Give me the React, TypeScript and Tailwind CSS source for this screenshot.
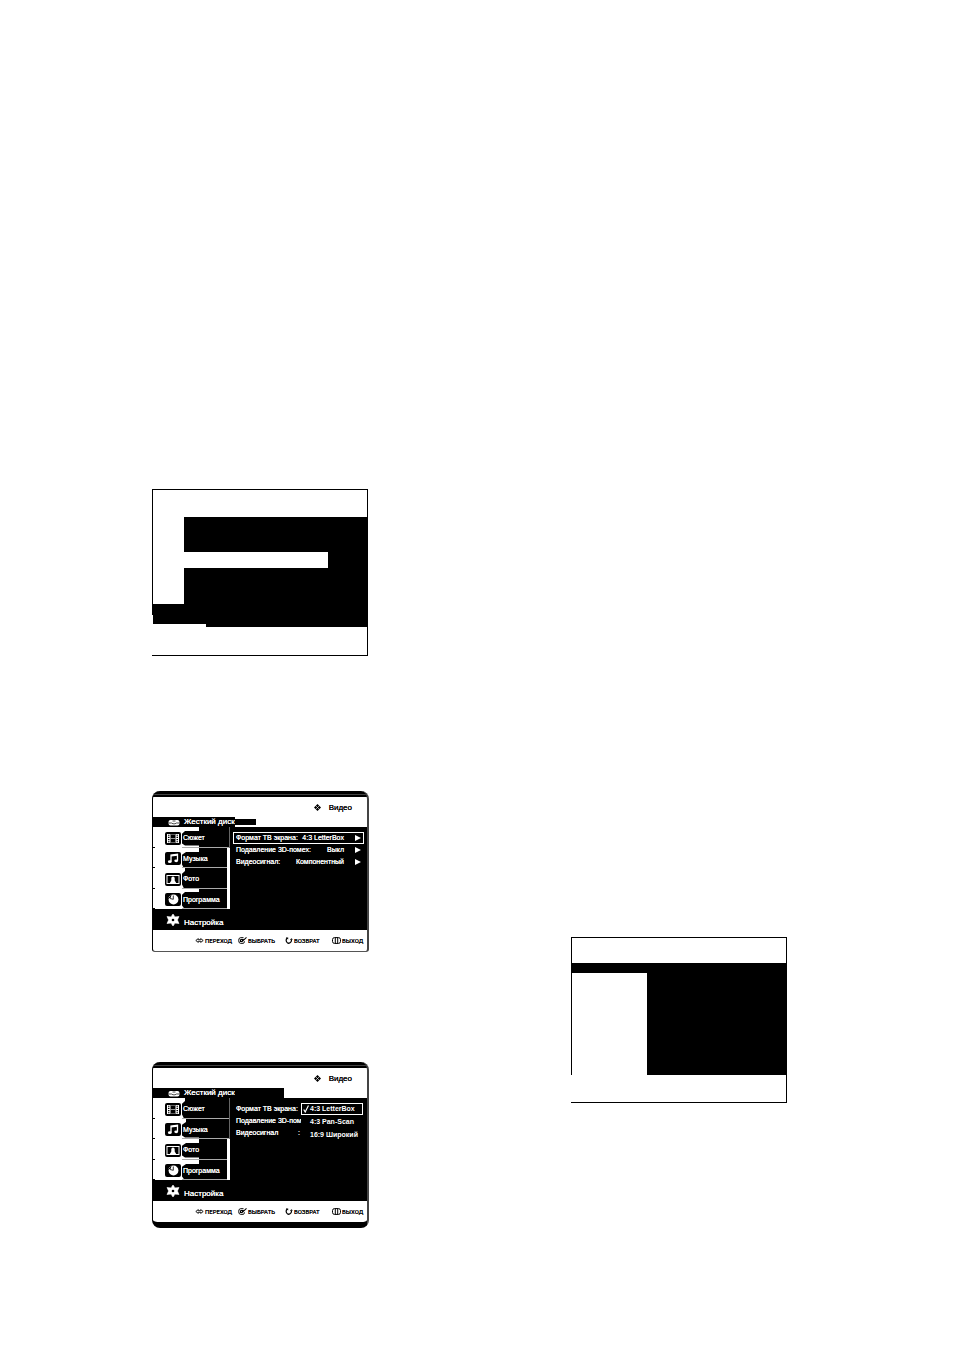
import type { ReactNode } from 'react';

const sans = "font-['Liberation_Sans',Arial,sans-serif]";
const narrow = "font-['Roboto','Liberation_Sans',sans-serif]";
const heavy = '[text-shadow:0_0_0_currentColor]';

function FilmIcon() {
  return (
    <svg viewBox="0 0 16 13" className="h-[13px] w-4 shrink-0" aria-hidden="true">
      <rect width="16" height="13" rx="2" />
      <path d="M2 2h3.500v9H2zM10.500 2H14v9h-3.500z" fill="#fff" />
      <path d="M3 3.200h1.500M3 5.400h1.500M3 7.600h1.500M3 9.800h1.500M11.500 3.200H13M11.500 5.400H13M11.500 7.600H13M11.500 9.800H13" stroke="#000" strokeWidth="1.100" />
      <path d="M5.500 2.500h5M5.500 10.500h5" stroke="#777" strokeWidth=".8" />
      <path d="M5.500 6.500h5" stroke="#bbb" strokeWidth=".8" />
    </svg>
  );
}

function NoteIcon() {
  return (
    <svg viewBox="0 0 16 13" className="h-[13px] w-4 shrink-0" aria-hidden="true">
      <rect width="16" height="13" rx="2" />
      <path d="M6 9.500V3l6.500-.8v6.300" stroke="#fff" strokeWidth="1.300" fill="none" />
      <path d="M6 3l6.500-.8v1.600L6 4.600z" fill="#fff" />
      <ellipse cx="4.800" cy="9.700" rx="1.900" ry="1.400" fill="#fff" />
      <ellipse cx="11.200" cy="8.800" rx="1.900" ry="1.400" fill="#fff" />
    </svg>
  );
}

function PhotoIcon() {
  return (
    <svg viewBox="0 0 16 13" className="h-[13px] w-4 shrink-0" aria-hidden="true">
      <rect width="16" height="13" rx="2" />
      <rect x="2" y="2.500" width="12" height="8" fill="none" stroke="#fff" />
      <path d="M4.500 10.500L6.300 7.500V5Q6.500 3.500 8 3.500T9.700 5v2.500l1.800 3z" fill="#fff" />
    </svg>
  );
}

function ClockIcon() {
  return (
    <svg viewBox="0 0 16 13" className="h-[13px] w-4 shrink-0" aria-hidden="true">
      <rect width="16" height="13" rx="2" />
      <circle cx="8.500" cy="6.500" r="4.900" fill="#fff" />
      <path d="M8.300 2.500v3.800L5 5.500" stroke="#000" strokeWidth=".8" fill="none" />
      <path d="M3 5.500V2h3.500L5.500 5z" />
      <path d="M3.500 4.500L5.500 2.500" stroke="#aaa" strokeWidth=".8" />
    </svg>
  );
}

function DiskIcon() {
  return (
    <svg viewBox="0 0 12 7" className="h-[7px] w-3 shrink-0" aria-hidden="true">
      <rect x=".5" y="1" width="11" height="5.500" rx="2" fill="#fff" />
      <path d="M.5 4h3l1.500.8h2L8.500 4h3M4.500 2h3" stroke="#000" strokeWidth=".7" fill="none" />
    </svg>
  );
}

function GearIcon() {
  return (
    <svg viewBox="0 0 14 12" className="h-3 w-[14px] shrink-0" aria-hidden="true">
      <path d="M7 0l2 2.900L13 2.500 11.400 6 13 9.500 9 9.100 7 12 5 9.100 1 9.500 2.600 6 1 2.500l4 .4z" fill="#fff" stroke="#fff" strokeWidth=".6" strokeLinejoin="round" />
      <circle cx="7" cy="6" r="1.300" />
    </svg>
  );
}

function Arrow() {
  return (
    <svg viewBox="0 0 6 6" className="h-[6px] w-[6px] shrink-0" aria-hidden="true">
      <path d="M0 0l6 3-6 3z" fill="#fff" />
    </svg>
  );
}

function MoveIcon() {
  return (
    <svg viewBox="0 0 9 7" className="h-[7px] w-[9px]" aria-hidden="true">
      <path d="M.8 3.500L3.300 1.600v1.100h2.400V1.600l2.500 1.900-2.500 1.900V4.300H3.300v1.100z" fill="#fff" stroke="#000" strokeWidth=".9" />
    </svg>
  );
}

function SelectIcon() {
  return (
    <svg viewBox="0 0 9 7" className="h-[7px] w-[9px]" aria-hidden="true">
      <path d="M5.500.7H2.500Q.7.700.7 3.500t1.800 2.800h2.700q1.200 0 1.200-2" stroke="#000" fill="none" />
      <path d="M2.500 2.500h2.300L4 4.600 8.500.4M2.500 2.500v2h1.500" stroke="#000" strokeWidth="1.100" fill="none" />
    </svg>
  );
}

function ReturnIcon() {
  return (
    <svg viewBox="0 0 8 7" className="h-[7px] w-2" aria-hidden="true">
      <path d="M2.200 1Q.4 3 1.700 5t3.300.8 1.300-3.300" stroke="#000" strokeWidth="1.200" fill="none" />
      <path d="M.8.400h2.400v2zM4.800 3l1.600-1.800L8 2.500z" />
    </svg>
  );
}

function ExitIcon() {
  return (
    <svg viewBox="0 0 9 7" className="h-[7px] w-[9px]" aria-hidden="true">
      <rect x=".5" y=".6" width="8" height="5.800" rx="2" stroke="#000" fill="none" />
      <path d="M3.300.5v6M5.700.5v6" stroke="#000" />
    </svg>
  );
}

type Section = { label: string; icon: ReactNode; jag: string; stripe: boolean };

const firstSections: Section[] = [
  { label: 'Сюжет', icon: <FilmIcon />, jag: 'M0 0h17v4H3L0 7v10l3 2h14v2H0z', stripe: false },
  { label: 'Музыка', icon: <NoteIcon />, jag: 'M0 0h17v4H4L0 7v10l2 4H0z', stripe: true },
  { label: 'Фото', icon: <PhotoIcon />, jag: 'M0 0h3v3L0 6v11l2 4H0z', stripe: true },
  { label: 'Программа', icon: <ClockIcon />, jag: 'M0 0h17v3H3L0 6v11l3 4H0z', stripe: true },
];

const secondSections: Section[] = [
  { label: 'Сюжет', icon: <FilmIcon />, jag: 'M0 0h3v3L0 6v11l2 4H0z', stripe: false },
  { label: 'Музыка', icon: <NoteIcon />, jag: 'M0 0h4v3L0 6v11l3 2h14v2H0z', stripe: false },
  { label: 'Фото', icon: <PhotoIcon />, jag: 'M0 0h17v4H4L0 7v10l3 2h14v2H0z', stripe: true },
  { label: 'Программа', icon: <ClockIcon />, jag: 'M0 0h17v4H4L0 7v10l3 4H0z', stripe: true },
];

function Sidebar({ sections }: { sections: Section[] }) {
  return (
    <nav className="flex w-[77px] shrink-0 flex-col" aria-label="Разделы">
      <div className="flex h-[82px] flex-col">
        {sections.map((s) => (
          <button key={s.label} type="button" className={`relative flex min-h-0 flex-1 bg-black text-left ${heavy}`}>
            <span className="flex h-full w-[29px] shrink-0 items-end bg-white">
              <span className="h-px w-[2px] bg-black" />
              <span className="flex h-full items-center pt-[2px] pl-[10px]">{s.icon}</span>
            </span>
            <svg viewBox="0 0 17 21" preserveAspectRatio="none" className="absolute left-[29px] top-0 h-full w-[17px]" aria-hidden="true">
              <path d={s.jag} fill="#fff" />
            </svg>
            <span className="relative flex h-full flex-1 items-center border-b border-[#aaa] pt-[3px] pl-px text-[7px] leading-[10px] whitespace-nowrap">{s.label}</span>
            <span className={s.stripe ? 'h-full w-[3px] bg-white' : 'h-full w-px bg-[#666]'} />
          </button>
        ))}
      </div>
      <button type="button" className={`flex h-[21px] items-center gap-1 pl-[13px] text-left ${heavy}`}>
        <GearIcon />
        <span className="whitespace-nowrap pt-[6px] text-[8px] leading-[10px]">Настройка</span>
      </button>
    </nav>
  );
}

function Footer() {
  const item = `flex items-center gap-px whitespace-nowrap ${heavy}`;
  return (
    <footer className={`grid h-[21px] grid-cols-[43px_47px_47px_1fr] items-center bg-white pl-[42px] text-[6px] leading-[10px] text-black ${narrow}`}>
      <button type="button" className={item}><MoveIcon />ПЕРЕХОД</button>
      <button type="button" className={item}><SelectIcon />ВЫБРАТЬ</button>
      <button type="button" className={item}><ReturnIcon />ВОЗВРАТ</button>
      <button type="button" className={item}><ExitIcon />ВЫХОД</button>
    </footer>
  );
}

function Screen({ sections, strip, closed, children }: { sections: Section[]; strip: ReactNode; closed: boolean; children: ReactNode }) {
  return (
    <section className={`overflow-hidden border-l border-r-2 border-l-black border-r-[#444] bg-black text-white ${sans} ${closed ? 'rounded-[8px] border-b-[6px] border-b-black' : 'rounded-t-[8px] rounded-b-[3px] border-b border-b-[#555]'}`}>
      <div className="flex h-[6px] items-center"><div className="h-px flex-1 bg-[#444]" /></div>
      <header className="flex h-5 items-center justify-end gap-2 bg-white pt-px pr-[15px] text-[8px] leading-[10px] text-black">
        <svg viewBox="0 0 7 7" className="h-[7px] w-[7px]" aria-hidden="true">
          <path d="M3.500 0L7 3.500 3.500 7 0 3.500z" />
          <path d="M1.500 1.500l4 4M5.500 1.500l-4 4" stroke="#fff" strokeWidth=".6" />
        </svg>
        <h2 className={heavy}>Видео</h2>
      </header>
      {strip}
      <div className="flex">
        <Sidebar sections={sections} />
        {children}
      </div>
      <Footer />
    </section>
  );
}

function DiskLabel() {
  return (
    <button type="button" className={`flex h-[10px] items-center gap-1 bg-black pl-[15px] ${heavy}`}>
      <DiskIcon />
      <span className="whitespace-nowrap text-[8px] leading-[10px]">Жесткий диск</span>
    </button>
  );
}

function Setting({ label, value, selected }: { label: string; value: string; selected?: boolean }) {
  return (
    <button type="button" className={`flex h-3 items-center justify-between whitespace-nowrap border px-[2px] text-[7px] leading-[10px] ${heavy} ${selected ? 'border-white' : 'border-transparent'}`}>
      <span>{label}</span>
      <span className="flex items-center gap-[11px]">{value}<Arrow /></span>
    </button>
  );
}

function DisplayMenu() {
  return (
    <Screen
      sections={firstSections}
      closed={false}
      strip={
        <div className="flex h-[10px] items-center bg-white">
          <DiskLabel />
          <div className="h-[6px] w-[21px] bg-black" />
        </div>
      }
    >
      <div className="flex min-w-0 flex-1 flex-col px-[3px] pt-[5px]">
        <Setting label="Формат ТВ экрана:" value="4:3 LetterBox" selected />
        <Setting label="Подавление 3D-помех:" value="Выкл" />
        <Setting label="Видеосигнал:" value="Компонентный" />
      </div>
    </Screen>
  );
}

function FormatMenu() {
  return (
    <Screen
      sections={secondSections}
      closed
      strip={
        <div className="flex h-[10px] bg-white">
          <DiskLabel />
          <div className="w-[49px] bg-black" />
        </div>
      }
    >
      <div className={`relative min-w-0 flex-1 pt-[5px] pl-[6px] text-[7px] leading-3 ${heavy}`}>
        <p className="whitespace-nowrap">Формат ТВ экрана:</p>
        <p className="whitespace-nowrap">Подавление 3D-помех</p>
        <p className="flex w-[64px] justify-between"><span>Видеосигнал</span><span>:</span></p>
        <div role="listbox" aria-label="Формат ТВ экрана" className="absolute top-[5px] right-1 flex w-[62px] flex-col bg-black font-bold">
          <button type="button" role="option" aria-selected="true" className="flex h-3 items-center gap-px whitespace-nowrap border border-white pl-px leading-[10px]">
            <svg viewBox="0 0 6 8" className="h-2 w-[6px] shrink-0" aria-hidden="true"><path d="M.7 4.500L2.200 7 5.500.5" stroke="#fff" strokeWidth="1.200" fill="none" /></svg>
            4:3 LetterBox
          </button>
          <button type="button" role="option" aria-selected="false" className="h-[14px] whitespace-nowrap pl-[9px] text-left">4:3 Pan-Scan</button>
          <button type="button" role="option" aria-selected="false" className="h-3 whitespace-nowrap pl-[9px] text-left">16:9 Широкий</button>
        </div>
      </div>
    </Screen>
  );
}

function RecordingFrame() {
  return (
    <div className="flex h-[167px] flex-col border-t border-r border-b border-black">
      <div className="flex h-[114px] border-l border-black">
        <div className="w-[31px]" />
        <div className="flex flex-1 flex-col pt-[27px]">
          <div className="h-[35px] bg-black" />
          <div className="flex h-4 justify-end"><div className="w-[39px] bg-black" /></div>
          <div className="h-9 bg-black" />
        </div>
      </div>
      <div className="h-[11px] bg-black" />
      <div className="ml-px h-[9px] bg-black" />
      <div className="ml-[54px] h-[3px] bg-black" />
    </div>
  );
}

function ListFrame() {
  return (
    <div className="flex h-[166px] flex-col border-t border-r border-b border-black">
      <div className="h-[25px] border-l border-black" />
      <div className="h-[10px] bg-black" />
      <div className="flex h-[102px] border-l border-black">
        <div className="w-[75px]" />
        <div className="flex-1 bg-black" />
      </div>
    </div>
  );
}

export default function App() {
  return (
    <main className="flex min-h-screen justify-between bg-white pr-[167px] pl-[152px]">
      <div className="flex w-[217px] flex-col pt-[489px] pb-[120px]">
        <div className="pr-px"><RecordingFrame /></div>
        <div className="pt-[135px]"><DisplayMenu /></div>
        <div className="pt-[110px]"><FormatMenu /></div>
      </div>
      <div className="w-[216px] pt-[937px]"><ListFrame /></div>
    </main>
  );
}
